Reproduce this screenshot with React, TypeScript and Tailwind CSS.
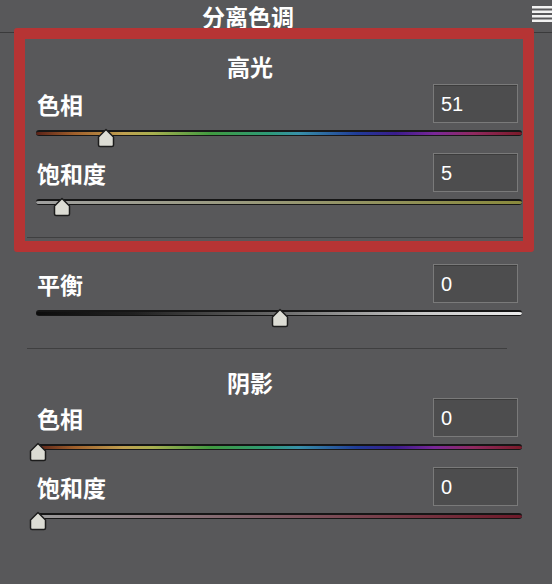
import React from "react";

type Track = "hue" | "satHigh" | "balance" | "satShadow";

const trackBg: Record<Track, string> = {
  hue: "bg-[linear-gradient(to_right,#5a2218_0%,#a0602c_8%,#c0a050_18%,#a8b050_24%,#409a40_36%,#2e9a78_48%,#3890a8_54%,#203c98_66%,#3a1c8c_74%,#7a2898_82%,#902a60_90%,#7a1a28_100%)]",
  satHigh: "bg-[linear-gradient(to_right,#a0a0a0_0%,#9a9a80_40%,#8a8a3c_100%)]",
  balance: "bg-[linear-gradient(to_right,#0c0c0c_0%,#202020_20%,#6a6a6a_50%,#c8c8c8_80%,#ececec_100%)]",
  satShadow: "bg-[linear-gradient(to_right,#9a9a9a_0%,#806068_45%,#6e1a2a_100%)]",
};

function Thumb({ left }: { left: number }) {
  return (
    <svg
      className="absolute top-[5px]"
      style={{ left: left - 10 }}
      width="20"
      height="20"
      viewBox="0 0 20 20"
    >
      <path
        d="M10 1.5 L17.5 9 L17.5 17 Q17.5 18.5 16 18.5 L4 18.5 Q2.5 18.5 2.5 17 L2.5 9 Z"
        fill="#dcdcd4"
        stroke="#1c1c1c"
        strokeWidth="1.5"
        strokeLinejoin="round"
      />
    </svg>
  );
}

function Control({
  label,
  value,
  track,
  pos,
}: {
  label: string;
  value: string;
  track: Track;
  pos: number;
}) {
  return (
    <div>
      <div className="flex h-[39px] items-center justify-between pl-[37px] pr-[34px]">
        <span className="pt-[2px] text-[23px] font-bold leading-none text-white">{label}</span>
        <div className="flex h-[39px] w-[85px] items-center border border-[#7a7a7a] bg-[#4d4d4e] pl-[7px] font-['Liberation_Sans',sans-serif] text-[20px] text-white shadow-[inset_0_1px_0_#3c3c3c]">
          {value}
        </div>
      </div>
      <div className="relative ml-[36px] mr-[30px] h-[30px] pt-[7px]">
        <div
          className={`h-[6px] rounded-full border-t-2 border-b border-[#161616] ${trackBg[track]}`}
        />
        <Thumb left={pos} />
      </div>
    </div>
  );
}

export default function App() {
  // slider width 486px
  const w = 486;
  return (
    <div className="relative h-[584px] w-[552px] overflow-hidden bg-[#58585a] font-['Noto_Sans_CJK_SC','Noto_Sans',sans-serif]">
      <div className="relative flex h-[33px] items-start justify-center border-b border-[#3a3a3b] pr-[56px] pt-[2px]">
        <span className="text-[23px] font-bold leading-[28px] text-white">分离色调</span>
        <svg className="absolute right-[-4px] top-[6px]" width="24" height="17" viewBox="0 0 24 17">
          <rect x="0" y="0" width="24" height="2.5" fill="#f2f2f2" />
          <rect x="0" y="4.5" width="24" height="2.5" fill="#f2f2f2" />
          <rect x="0" y="9" width="24" height="2.5" fill="#f2f2f2" />
          <rect x="0" y="13.5" width="24" height="2.5" fill="#f2f2f2" />
        </svg>
      </div>

      <div className="pt-[18px]">
        <div className="h-[33px] pr-[52px] text-center text-[23px] font-bold leading-[31px] text-white">高光</div>
        <Control label="色相" value="51" track="hue" pos={(51 / 360) * w + 1} />
        <Control label="饱和度" value="5" track="satHigh" pos={(5 / 100) * w + 2} />
        <div className="mx-[27px] h-[16px] border-b border-[#3f3f40]" />
      </div>

      <div className="pt-[26px]">
        <Control label="平衡" value="0" track="balance" pos={w / 2 + 1} />
        <div className="mx-[27px] mr-[45px] h-[16px] border-b border-[#3f3f40]" />
      </div>

      <div className="pt-[18px]">
        <div className="h-[31px] pr-[52px] text-center text-[23px] font-bold leading-[31px] text-white">阴影</div>
        <Control label="色相" value="0" track="hue" pos={2} />
        <Control label="饱和度" value="0" track="satShadow" pos={2} />
      </div>

      <div className="pointer-events-none absolute left-[14px] top-[28px] h-[224px] w-[520px] rounded-[3px] border-[11px] border-[#b63434] blur-[0.6px]" />
    </div>
  );
}
